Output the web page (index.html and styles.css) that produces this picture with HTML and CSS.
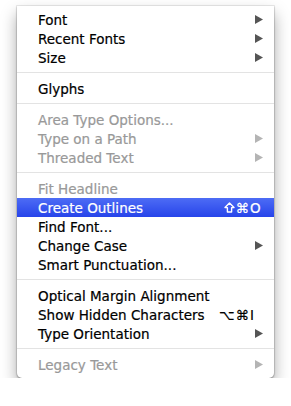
FILE: index.html
```html
<!DOCTYPE html>
<html lang="en">
<head>
    <meta charset="UTF-8">
    <title>Type Menu</title>
    <link rel="stylesheet" href="styles.css">
</head>
<body>
    <div class="menu">
        <div class="item"><span class="label">Font</span><svg class="arrow" viewBox="0 0 8 9"><path d="M0 0L8 4.5L0 9Z"/></svg></div>
        <div class="item"><span class="label">Recent Fonts</span><svg class="arrow" viewBox="0 0 8 9"><path d="M0 0L8 4.5L0 9Z"/></svg></div>
        <div class="item"><span class="label">Size</span><svg class="arrow" viewBox="0 0 8 9"><path d="M0 0L8 4.5L0 9Z"/></svg></div>
        <div class="sep"></div>
        <div class="item"><span class="label">Glyphs</span></div>
        <div class="sep"></div>
        <div class="item disabled"><span class="label">Area Type Options...</span></div>
        <div class="item disabled"><span class="label">Type on a Path</span><svg class="arrow" viewBox="0 0 8 9"><path d="M0 0L8 4.5L0 9Z"/></svg></div>
        <div class="item disabled"><span class="label">Threaded Text</span><svg class="arrow" viewBox="0 0 8 9"><path d="M0 0L8 4.5L0 9Z"/></svg></div>
        <div class="sep"></div>
        <div class="item disabled"><span class="label">Fit Headline</span></div>
        <div class="item selected">
            <span class="label">Create Outlines</span>
            <svg class="shift" viewBox="0 0 11 11"><path d="M5.5 1L10 5.6H7.6V10H3.4V5.6H1Z"/></svg>
            <span class="mods">⌘</span><span class="key">O</span>
        </div>
        <div class="item"><span class="label">Find Font...</span></div>
        <div class="item"><span class="label">Change Case</span><svg class="arrow" viewBox="0 0 8 9"><path d="M0 0L8 4.5L0 9Z"/></svg></div>
        <div class="item"><span class="label">Smart Punctuation...</span></div>
        <div class="sep"></div>
        <div class="item"><span class="label">Optical Margin Alignment</span></div>
        <div class="item"><span class="label">Show Hidden Characters</span><span class="mods">⌥⌘</span><span class="key">I</span></div>
        <div class="item"><span class="label">Type Orientation</span><svg class="arrow" viewBox="0 0 8 9"><path d="M0 0L8 4.5L0 9Z"/></svg></div>
        <div class="sep"></div>
        <div class="item disabled"><span class="label">Legacy Text</span><svg class="arrow" viewBox="0 0 8 9"><path d="M0 0L8 4.5L0 9Z"/></svg></div>
    </div>
</body>
</html>
```

FILE: styles.css
```css
body {
    margin: 0;
    padding: 0;
    background: #fff;
    font-family: 'DejaVu Sans', Verdana, sans-serif;
}
.menu {
    margin: 6px 0 0 17px;
    width: 257px;
    padding: 4px 0 4px;
    background: #fff;
    border-radius: 0 0 5px 5px;
    box-shadow: 0 0 0 1px rgba(0, 0, 0, 0.07), 0 1px 2px rgba(0, 0, 0, 0.3), 0 8px 16px rgba(0, 0, 0, 0.35);
}
.item {
    display: flex;
    align-items: center;
    height: 19px;
    padding: 0 11px 0 21px;
    font-size: 13.5px;
    color: #000;
    -webkit-text-stroke: 0.2px currentColor;
}
.label {
    flex: 1;
    white-space: nowrap;
}
.arrow {
    width: 8px;
    height: 9px;
    fill: #555;
}
.disabled {
    color: #999;
}
.disabled .arrow {
    fill: #b4b4b4;
}
.selected {
    color: #fff;
    background: linear-gradient(#4d6cf5, #2744ea);
}
.shift {
    width: 11px;
    height: 11px;
    margin-right: 1px;
    fill: none;
    stroke: currentColor;
    stroke-width: 1.4;
    stroke-linejoin: round;
}
.mods {
    text-align: right;
    letter-spacing: 1px;
}
.key {
    width: 13px;
}
.sep {
    height: 1px;
    margin: 5px 0 6px;
    background: #e3e3e3;
}
```
